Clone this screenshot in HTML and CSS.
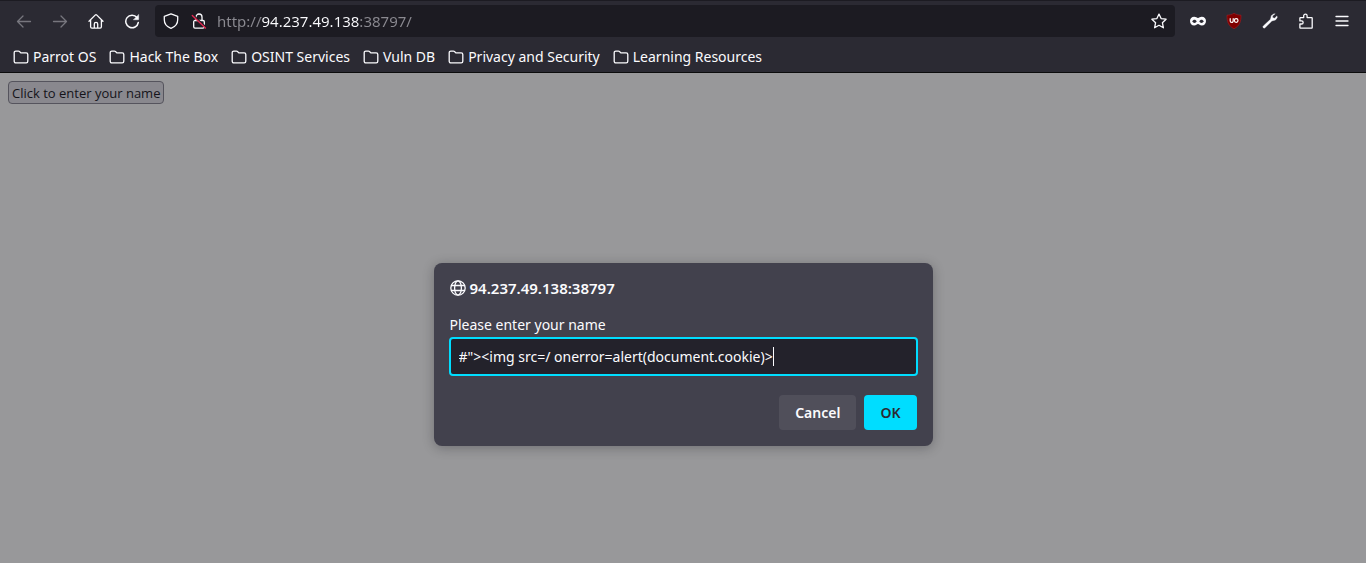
FILE: index.html
```html
<!DOCTYPE html>
<html lang="en">
<head>
<meta charset="utf-8">
<title>94.237.49.138:38797</title>
<link rel="stylesheet" href="styles.css">
</head>
<body>
<svg class="defs" aria-hidden="true">
  <symbol id="folder" viewBox="0 0 16 16"><path d="M1.2 12.3V3.7a1.6 1.6 0 0 1 1.6-1.6h2.6a1.6 1.6 0 0 1 1.1.4l1.3 1.4h5.4a1.6 1.6 0 0 1 1.6 1.6v6.8a1.6 1.6 0 0 1-1.6 1.6H2.8a1.6 1.6 0 0 1-1.6-1.6z" fill="none" stroke="currentColor" stroke-width="1.3"/></symbol>
</svg>
<header class="chrome">
  <nav class="toolbar" aria-label="Navigation">
    <div class="nav-buttons">
      <button class="tool dim" aria-label="Back"><svg viewBox="0 0 16 16"><path d="M14.5 8.5h-13M7 3 1.500 8.500 7 14"/></svg></button>
      <button class="tool dim" aria-label="Forward"><svg viewBox="0 0 16 16"><path d="M1.500 8.500h13M9 3l5.500 5.500L9 14"/></svg></button>
      <button class="tool" aria-label="Home"><svg viewBox="0 0 16 16"><path d="M1 8.300 7.400 1.900a.9.9 0 0 1 1.200 0L15 8.300M2.600 7v6.800a1.300 1.300 0 0 0 1.300 1.300h8.200a1.300 1.300 0 0 0 1.300-1.300V7M6.300 15v-4a1.700 1.700 0 0 1 3.400 0v4"/></svg></button>
      <button class="tool" aria-label="Reload"><svg viewBox="0 0 16 16"><path class="thick" d="M13 4.500A6.300 6.300 0 1 0 14.300 9.500"/><path class="solid" d="M14.700 1.700v4.600a.5.5 0 0 1-.5.500H9.600z"/></svg></button>
    </div>
    <div class="urlbar">
      <button class="inline-icon" aria-label="Tracking protection"><svg viewBox="0 0 16 16"><path d="M8 .8 14.700 3.300v3.500c0 4-2.400 7-6.700 8.600C3.700 13.800 1.300 10.800 1.300 6.800V3.300z"/></svg></button>
      <button class="inline-icon" aria-label="Connection not secure"><svg viewBox="0 0 16 16"><path d="M5 7.500V4a3 3 0 0 1 6 0v3.500M4 7.500h8a1.300 1.300 0 0 1 1.300 1.300v5A1.300 1.300 0 0 1 12 15.100H4a1.300 1.300 0 0 1-1.300-1.300v-5A1.300 1.300 0 0 1 4 7.500z"/><path class="gap" d="M2 2.300 15 14.600"/><path class="strike" d="M1.300 2.500 14.500 15"/></svg></button>
      <input class="address" type="text" aria-label="Address" value="http://94.237.49.138:38797/" spellcheck="false">
      <button class="inline-icon" aria-label="Bookmark this page"><svg viewBox="0 0 16 16"><path d="M8 1.100 10.100 5.600 15.100 6.200 11.400 9.700 12.400 14.800 8 12.300 3.600 14.800 4.600 9.700.9 6.200 5.900 5.600z"/></svg></button>
    </div>
    <div class="extensions">
      <button class="tool" aria-label="Containers"><svg viewBox="0 0 16 16"><path class="mask" fill-rule="evenodd" d="M4.200 3.700C5.900 3.700 6.900 4.900 8 4.900s2.100-1.200 3.800-1.200C14.300 3.700 16 5.300 16 8s-1.700 4.600-4.200 4.600c-2 0-2.600-1.500-3.800-1.500s-1.800 1.500-3.800 1.500C1.700 12.600 0 10.700 0 8s1.700-4.300 4.200-4.300zM2.200 8.300C2.800 9.400 3.600 9.900 4.500 9.900s1.700-.6 2.200-1.600C6.200 7.300 5.400 6.700 4.500 6.700S2.800 7.200 2.200 8.300zM9.300 8.300c.5 1 1.300 1.600 2.200 1.600s1.700-.5 2.300-1.600c-.6-1.100-1.400-1.600-2.300-1.600s-1.700.6-2.200 1.600z"/></svg></button>
      <button class="tool" aria-label="uBlock Origin"><svg viewBox="0 0 16 16"><path class="ublock" d="M8 .2C10 1.600 12.500 2.100 15 2.200 15 8.500 14 12.500 8 15.800 2 12.500 1 8.500 1 2.200 3.500 2.100 6 1.600 8 .2z"/><path class="ublock-mark" d="M4.200 5.700v2.200a1.500 1.500 0 0 0 3 0V5.700"/><circle class="ublock-mark" cx="10.200" cy="7.500" r="1.800"/></svg></button>
      <button class="tool" aria-label="Tools"><svg viewBox="0 0 16 16"><path class="solid" d="M11.600 1 9.300 2.700 8.500 6.300 1.300 13a1.200 1.200 0 0 0 0 1.700 1.200 1.200 0 0 0 1.700 0L9.900 7.900l3.500-.8 1.800-2.400-.2-1.800-2.400 2.300-1.800-.4-.4-1.700L12.900 1z"/></svg></button>
      <button class="tool" aria-label="Extensions"><svg viewBox="0 0 16 16"><path d="M1.900 14.500V11h1.700a1.500 1.500 0 0 0 0-3.100H1.900V5.200a.6.6 0 0 1 .6-.6h3.200V2.800a1.700 1.700 0 0 1 3.400 0v1.800h4.500a.6.6 0 0 1 .6.600v9.300a.6.6 0 0 1-.6.600H2.500a.6.6 0 0 1-.6-.6z"/></svg></button>
      <button class="tool" aria-label="Menu"><svg viewBox="0 0 16 16"><path d="M2 3.500h12M2 8h12M2 12.500h12"/></svg></button>
    </div>
  </nav>
  <nav class="bookmarks" aria-label="Bookmarks">
    <a href="#"><svg><use href="#folder"/></svg>Parrot OS</a>
    <a href="#"><svg><use href="#folder"/></svg>Hack The Box</a>
    <a href="#"><svg><use href="#folder"/></svg>OSINT Services</a>
    <a href="#"><svg><use href="#folder"/></svg>Vuln DB</a>
    <a href="#"><svg><use href="#folder"/></svg>Privacy and Security</a>
    <a href="#"><svg><use href="#folder"/></svg>Learning Resources</a>
  </nav>
</header>
<main class="page">
  <button class="page-button">Click to enter your name</button>
  <form class="dialog" role="dialog" aria-labelledby="origin">
    <h1 class="origin" id="origin"><svg viewBox="0 0 16 16" aria-hidden="true"><circle cx="8" cy="8" r="7.200"/><ellipse cx="8" cy="8" rx="3.400" ry="7.200"/><path d="M1.500 5.500h13M1.500 10.500h13"/></svg>94.237.49.138:38797</h1>
    <label class="prompt" for="name">Please enter your name</label>
    <div class="field"><input id="name" type="text" value="#&quot;&gt;&lt;img src=/ onerror=alert(document.cookie)&gt;" spellcheck="false"><span class="caret"></span></div>
    <div class="actions">
      <button class="action" type="button">Cancel</button>
      <button class="action primary" type="button">OK</button>
    </div>
  </form>
</main>
</body>
</html>
```
FILE: styles.css
```css
* { box-sizing: border-box; }

body {
  margin: 0;
  min-height: 100vh;
  display: flex;
  flex-direction: column;
  background: #98989a;
  color: #fbfbfe;
  font: 14px/20px "Noto Sans", sans-serif;
}

button, input { font: inherit; color: inherit; }
button { padding: 0; border: 0; background: none; }
svg {
  display: block;
  flex: none;
  width: 16px;
  height: 16px;
  fill: none;
  stroke: currentColor;
  stroke-width: 1.3;
  stroke-linecap: round;
  stroke-linejoin: round;
}
.defs { position: absolute; width: 0; height: 0; }

.chrome {
  background: #2b2a33;
  border-top: 1px solid #1c1b22;
  border-bottom: 1px solid #0c0c0d;
}
.toolbar {
  display: flex;
  align-items: center;
  gap: 5px;
  padding: 4px 6px;
}
.nav-buttons, .extensions { display: flex; }
.tool {
  display: grid;
  place-items: center;
  width: 36px;
  height: 32px;
}
.dim { color: #77767e; }
.thick { stroke-width: 1.5; }
.solid { fill: currentColor; stroke-width: 0.4; }
.mask { fill: currentColor; stroke: none; }
.gap { stroke: #1c1b22; stroke-width: 2; }
.strike { stroke: #e22850; stroke-width: 1.4; }
.ublock { fill: #800000; stroke: #a51d24; stroke-width: 0.6; }
.ublock-mark { stroke: #ffffff; stroke-width: 1.2; }

.urlbar {
  flex: 1;
  display: flex;
  align-items: center;
  gap: 12px;
  height: 32px;
  padding: 0 8px;
  border-radius: 4px;
  background: #1c1b22;
}
.address {
  flex: 1;
  min-width: 0;
  height: 24px;
  padding: 0;
  border: 0;
  outline: 0;
  margin-left: -2px;
  background: linear-gradient(90deg, #8b8a91 44px, #fbfbfe 44px, #fbfbfe 143px, #8b8a91 143px);
  background-clip: text;
  -webkit-background-clip: text;
  color: transparent;
  font-size: 15px;
}

.bookmarks {
  display: flex;
  gap: 13px;
  padding: 6px 12px 5px 13px;
}
.bookmarks a {
  display: flex;
  align-items: center;
  gap: 4px;
  color: inherit;
  text-decoration: none;
  white-space: nowrap;
}

.page {
  flex: 1;
  display: flex;
  flex-direction: column;
  align-items: flex-start;
  padding: 8px;
}
.page-button {
  padding: 1px 3px 0;
  border: 1px solid #55545d;
  border-radius: 4px;
  background: #89888e;
  color: #15141a;
  font-family: "Open Sans", sans-serif;
  font-size: 13px;
  line-height: 20px;
}

.dialog {
  align-self: center;
  display: flex;
  flex-direction: column;
  width: 100%;
  max-width: 499px;
  margin-top: 159px;
  padding: 15px 16px 16px;
  border-radius: 8px;
  background: #42414d;
  box-shadow: 0 2px 12px rgba(20, 20, 26, 0.3);
}
.origin {
  display: flex;
  align-items: center;
  gap: 4px;
  margin: 0 0 17px;
  font-size: 15px;
  line-height: 20px;
  font-weight: 600;
}
.field {
  display: flex;
  align-items: center;
  height: 39px;
  margin: 2px -1px 19px;
  padding: 0 8px;
  border: 2px solid #00ddff;
  border-radius: 4px;
  background: #23222b;
}
.field input {
  field-sizing: content;
  min-width: 0;
  padding: 0;
  border: 0;
  outline: 0;
  background: none;
}
.caret { width: 1px; height: 19px; background: #fbfbfe; }
.actions {
  display: flex;
  justify-content: flex-end;
  gap: 8px;
}
.action {
  padding: 0 16px;
  border-radius: 4px;
  background: #504f5a;
  font-weight: 600;
  line-height: 35px;
}
.primary { background: #00ddff; color: #2b2a33; }
```
